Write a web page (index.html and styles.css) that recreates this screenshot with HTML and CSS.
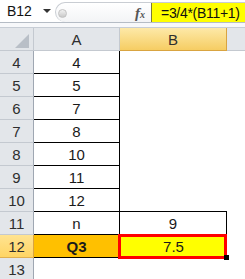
FILE: index.html
```html
<!DOCTYPE html>
<html lang="en">
<head>
  <meta charset="UTF-8" />
  <title>Q3 formula</title>
  <link rel="stylesheet" href="styles.css">
</head>
<body>

  <div class="formula-bar">
    <div class="name-box">
      <span>B12</span>
      <span class="drop"></span>
    </div>
    <div class="edit-area">
      <span class="knob"></span>
      <span class="fx">f<small>x</small></span>
      <div class="formula">=3/4*(B11+1)</div>
    </div>
  </div>

  <div class="bar-gap"></div>

  <div class="sheet">
    <div class="head corner">
      <svg width="14" height="14" viewBox="0 0 14 14"><polygon points="14,0 14,14 0,14" fill="#b9bfc7" /></svg>
    </div>
    <div class="head">A</div>
    <div class="head picked">B</div>
    <div class="head fill"></div>

    <div class="row-head">4</div><div class="cell a">4</div><div class="cell b"></div><div class="cell rest"></div>
    <div class="row-head">5</div><div class="cell a">5</div><div class="cell b"></div><div class="cell rest"></div>
    <div class="row-head">6</div><div class="cell a">7</div><div class="cell b"></div><div class="cell rest"></div>
    <div class="row-head">7</div><div class="cell a">8</div><div class="cell b"></div><div class="cell rest"></div>
    <div class="row-head">8</div><div class="cell a">10</div><div class="cell b"></div><div class="cell rest"></div>
    <div class="row-head">9</div><div class="cell a">11</div><div class="cell b"></div><div class="cell rest"></div>
    <div class="row-head">10</div><div class="cell a">12</div><div class="cell b under"></div><div class="cell rest"></div>
    <div class="row-head">11</div><div class="cell a">n</div><div class="cell b boxed">9</div><div class="cell rest"></div>
    <div class="row-head picked">12</div><div class="cell a label">Q3</div><div class="cell b result">7.5</div><div class="cell rest"></div>
    <div class="row-head">13</div><div class="cell empty"></div><div class="cell"></div><div class="cell rest"></div>
  </div>

</body>
</html>
```

FILE: styles.css
```css
* {
  box-sizing: border-box;
  margin: 0;
  padding: 0;
}

body {
  font-family: 'Liberation Sans', Arial, sans-serif;
  background: #fff;
  color: #1a1a1a;
  width: 245px;
  height: 279px;
  overflow: hidden;
}

/* barra de formulas */
.formula-bar {
  display: flex;
  height: 23px;
  border-bottom: 1px solid #b5bcc5;
}

.name-box {
  width: 55px;
  display: flex;
  align-items: center;
  padding-left: 7px;
  font-size: 14px;
  color: #111;
}

.drop {
  margin-left: 11px;
  width: 0;
  height: 0;
  border-left: 4px solid transparent;
  border-right: 4px solid transparent;
  border-top: 4px solid #333;
}

.edit-area {
  flex: 1;
  display: flex;
  align-items: stretch;
  margin-top: 2px;
  border: 1px solid #c9cdd3;
  border-right: none;
  border-bottom: none;
  border-radius: 11px 0 0 11px;
  background: linear-gradient(#ffffff, #f3f4f6);
}

.knob {
  width: 9px;
  height: 9px;
  margin: 6px 0 0 2px;
  border-radius: 50%;
  background: linear-gradient(#f2f2f2, #c9c9c9);
  border: 1px solid #c2c2c2;
}

.fx {
  flex: 1;
  text-align: right;
  padding-right: 6px;
  font-family: 'Liberation Serif', serif;
  font-style: italic;
  font-weight: bold;
  font-size: 15px;
  line-height: 20px;
  color: #555;
}

.fx small {
  font-size: 10px;
}

.formula {
  width: 94px;
  background: #ffff00;
  border-left: 1px solid #7a7a3a;
  padding-left: 9px;
  font-size: 14px;
  letter-spacing: -0.3px;
  line-height: 20px;
  color: #111;
  white-space: nowrap;
}

.bar-gap {
  height: 5px;
  background: #f7f8fa;
  border-bottom: 1px solid #c7cdd5;
}

/* hoja */
.sheet {
  display: grid;
  grid-template-columns: 34px 86px 107px 1fr;
  grid-auto-rows: 23px;
  font-size: 15px;
}

.head,
.row-head {
  background: #e3e6ea;
  color: #2e2e2e;
  display: flex;
  align-items: center;
  justify-content: center;
  border-right: 1px solid #c4c9d0;
  border-bottom: 1px solid #c4c9d0;
  font-size: 15px;
}

.row-head {
  border-right-color: #9fa7b2;
}

.corner {
  justify-content: flex-end;
  align-items: flex-end;
  padding: 0 4px 2px 0;
}

.head.picked {
  background: linear-gradient(#fde9a8, #f6cd63);
  border-right-color: #d9a441;
  border-bottom-color: #d9a441;
}

.row-head.picked {
  background: linear-gradient(#ffe391, #ffd564);
  border-right-color: #d9a441;
  border-bottom-color: #e0b050;
}

.head.fill {
  border-right: none;
}

.cell {
  display: flex;
  align-items: center;
  justify-content: center;
  background: #fff;
  color: #1a1a1a;
}

.cell.a {
  border-right: 1px solid #000;
  border-bottom: 1px solid #000;
}

.cell.under {
  border-bottom: 1px solid #000;
}

.cell.boxed {
  border-right: 1px solid #000;
}

.cell.label {
  background: #ffc000;
  font-weight: bold;
}

.cell.result {
  position: relative;
  background: #ffff00;
}

/* marco de la celda activa */
.cell.result::before {
  content: "";
  position: absolute;
  top: -1px;
  left: -2px;
  right: 0;
  bottom: -1px;
  border: 3px solid #ff0000;
}

.cell.result::after {
  content: "";
  position: absolute;
  right: -2px;
  bottom: -2px;
  width: 5px;
  height: 5px;
  background: #000;
}
```
